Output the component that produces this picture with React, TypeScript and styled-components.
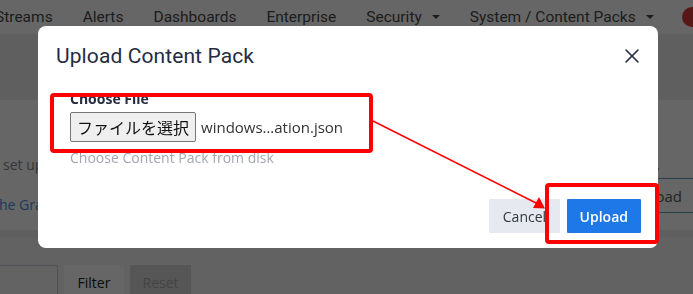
import React from "react";
import styled, { createGlobalStyle } from "styled-components";
import { X } from "lucide-react";

const GlobalStyle = createGlobalStyle`
  html, body {
    margin: 0;
    padding: 0;
  }
  body {
    width: 693px;
    height: 294px;
    overflow: hidden;
    background: #eeeeee;
    font-family: "Open Sans", "Noto Sans", sans-serif;
    font-size: 14px;
    color: #333333;
  }
`;

const Page = styled.div`
  width: 693px;
  height: 294px;
  display: flex;
  flex-direction: column;
  gap: 8px;
  overflow: hidden;
`;

const TopNav = styled.nav`
  height: 34px;
  flex: none;
  background: #ffffff;
  display: flex;
  align-items: center;
  overflow: hidden;
  margin-bottom: 58px;
`;

const NavList = styled.ul`
  list-style: none;
  margin: 0 0 0 -5px;
  padding: 0;
  display: flex;
  align-items: center;
  gap: 30px;
`;

const NavItem = styled.li`
  font-family: Roboto, "Noto Sans", sans-serif;
  font-size: 15.5px;
  color: #4a4a4a;
  display: flex;
  align-items: center;
  gap: 10px;
  white-space: nowrap;
`;

const Caret = styled.span`
  width: 0;
  height: 0;
  border-left: 4px solid transparent;
  border-right: 4px solid transparent;
  border-top: 4px solid #4a4a4a;
`;

const Avatar = styled.span`
  margin-left: auto;
  margin-right: -9px;
  width: 20px;
  height: 20px;
  border-radius: 50%;
  background: #d83a3a;
`;

const Panel = styled.section<{ $height: number; $tone?: string }>`
  flex: none;
  height: ${(p) => p.$height}px;
  background: ${(p) => p.$tone || "#ffffff"};
  overflow: hidden;
`;

const ContentPanel = styled(Panel)`
  display: flex;
  flex-direction: column;
  padding-top: 55px;
  box-sizing: border-box;
`;

const Paragraph = styled.p`
  margin: 0 0 0 3px;
  line-height: 20px;
  color: #8a8a8a;
  white-space: nowrap;
`;

const LinkRow = styled.div`
  margin-top: 3px;
  display: flex;
  align-items: flex-start;
  justify-content: space-between;
`;

const PageLink = styled.a`
  margin: 17px 0 0 -6px;
  line-height: 20px;
  color: #4a8fe6;
  white-space: nowrap;
`;

const OutlineButton = styled.button`
  margin-right: -8px;
  height: 35px;
  padding: 0 18px 0 12px;
  background: #ffffff;
  border: 1px solid #cfd6dc;
  border-top-color: #5f9fb8;
  border-bottom-color: #5f9fb8;
  font-family: "Open Sans", sans-serif;
  font-size: 15px;
  color: #5a5a5a;
`;

const FilterPanel = styled(Panel)`
  display: flex;
  align-items: flex-start;
  gap: 6px;
  padding-top: 27px;
  box-sizing: border-box;
`;

const FilterInput = styled.input`
  margin-left: -22px;
  width: 80px;
  height: 34px;
  box-sizing: border-box;
  border: 1px solid #c9c9d6;
  background: #f8f8f8;
`;

const FilterButton = styled.button<{ $disabled?: boolean }>`
  width: ${(p) => (p.$disabled ? 61 : 60)}px;
  height: 34px;
  border: none;
  background: ${(p) => (p.$disabled ? "#d6d6d6" : "#ffffff")};
  color: ${(p) => (p.$disabled ? "#ababab" : "#222222")};
  font-family: "Open Sans", sans-serif;
  font-size: 14px;
  padding: 0;
`;

const Backdrop = styled.div`
  position: fixed;
  inset: 0;
  background: rgba(0, 0, 0, 0.6);
  padding: 26px 0 0 38px;
  box-sizing: border-box;
`;

const Modal = styled.div`
  width: 620px;
  background: #ffffff;
  border-radius: 8px;
  display: flex;
  flex-direction: column;
`;

const ModalHeader = styled.header`
  display: flex;
  align-items: center;
  justify-content: space-between;
  padding: 15px 14px 0 18px;
`;

const ModalTitle = styled.h4`
  margin: 0;
  font-family: Roboto, "Noto Sans", sans-serif;
  font-weight: 400;
  font-size: 21px;
  letter-spacing: 0.1px;
  line-height: 30px;
  color: #252c41;
`;

const CloseButton = styled.button`
  width: 24px;
  height: 24px;
  padding: 0;
  border: none;
  background: none;
  color: #252c41;
  display: flex;
`;

const ModalBody = styled.div`
  padding: 18px 32px 31px;
  display: flex;
  flex-direction: column;
`;

const Label = styled.label`
  font-weight: 700;
  line-height: 20px;
  margin-bottom: 3px;
  color: #252c41;
`;

const FileRow = styled.div`
  display: flex;
  align-items: center;
  gap: 5px;
  height: 30px;
`;

const FileButton = styled.button`
  height: 30px;
  padding: 0 6px;
  border: 1px solid #767676;
  border-radius: 2px;
  background: #efefef;
  font-family: "Noto Sans CJK JP", "Noto Sans", sans-serif;
  font-size: 16px;
  color: #111111;
`;

const FileName = styled.span`
  font-size: 15px;
  color: #333333;
  white-space: nowrap;
`;

const HelpText = styled.span`
  margin-top: 6px;
  line-height: 20px;
  color: #a3a7b2;
`;

const ModalFooter = styled.footer`
  display: flex;
  justify-content: flex-end;
  gap: 7px;
  padding: 0 17px 15px;
`;

const ActionButton = styled.button<{ $primary?: boolean }>`
  height: 34px;
  padding: 0 ${(p) => (p.$primary ? 13 : 13.5)}px;
  border: none;
  border-radius: 1px;
  background: ${(p) => (p.$primary ? "#1f78e8" : "#e7e9f1")};
  color: ${(p) => (p.$primary ? "#ffffff" : "#333740")};
  font-family: "Open Sans", sans-serif;
  font-size: 14px;
  font-weight: ${(p) => (p.$primary ? 600 : 400)};
`;

const Annotations = styled.svg`
  position: fixed;
  left: 0;
  top: 0;
  pointer-events: none;
`;

const navItems = [
  { label: "Streams" },
  { label: "Alerts" },
  { label: "Dashboards" },
  { label: "Enterprise" },
  { label: "Security", menu: true },
  { label: "System / Content Packs", menu: true },
];

export default function App() {
  return (
    <>
      <GlobalStyle />
      <Page>
        <TopNav>
          <NavList>
            {navItems.map((item) => (
              <NavItem key={item.label}>
                {item.label}
                {item.menu && <Caret />}
              </NavItem>
            ))}
          </NavList>
          <Avatar />
        </TopNav>
        <ContentPanel $height={130}>
          <Paragraph>
            set up a specific data source. A content pack can include inputs,
            extractors, streams and dashboards.
          </Paragraph>
          <LinkRow>
            <PageLink>the Graylog Marketplace</PageLink>
            <OutlineButton>Upload</OutlineButton>
          </LinkRow>
        </ContentPanel>
        <FilterPanel $height={80} $tone="#f4f4f4">
          <FilterInput />
          <FilterButton>Filter</FilterButton>
          <FilterButton $disabled>Reset</FilterButton>
        </FilterPanel>
      </Page>

      <Backdrop>
        <Modal>
          <ModalHeader>
            <ModalTitle>Upload Content Pack</ModalTitle>
            <CloseButton aria-label="Close">
              <X size={24} strokeWidth={1.6} />
            </CloseButton>
          </ModalHeader>
          <ModalBody>
            <Label>Choose File</Label>
            <FileRow>
              <FileButton>ファイルを選択</FileButton>
              <FileName>windows…ation.json</FileName>
            </FileRow>
            <HelpText>Choose Content Pack from disk</HelpText>
          </ModalBody>
          <ModalFooter>
            <ActionButton>Cancel</ActionButton>
            <ActionButton $primary>Upload</ActionButton>
          </ModalFooter>
        </Modal>
      </Backdrop>

      <Annotations width={693} height={294} viewBox="0 0 693 294">
        <rect x={52} y={95} width={319} height={56} rx={2} fill="none" stroke="#ff0000" strokeWidth={4} />
        <rect x={547} y={185} width={110} height={57} rx={2} fill="none" stroke="#ff0000" strokeWidth={4} />
        <line x1={373} y1={121} x2={536} y2={203} stroke="#ff0000" strokeWidth={1.5} />
        <polygon points="545,208.5 533,208 539,197" fill="#ff0000" />
      </Annotations>
    </>
  );
}
